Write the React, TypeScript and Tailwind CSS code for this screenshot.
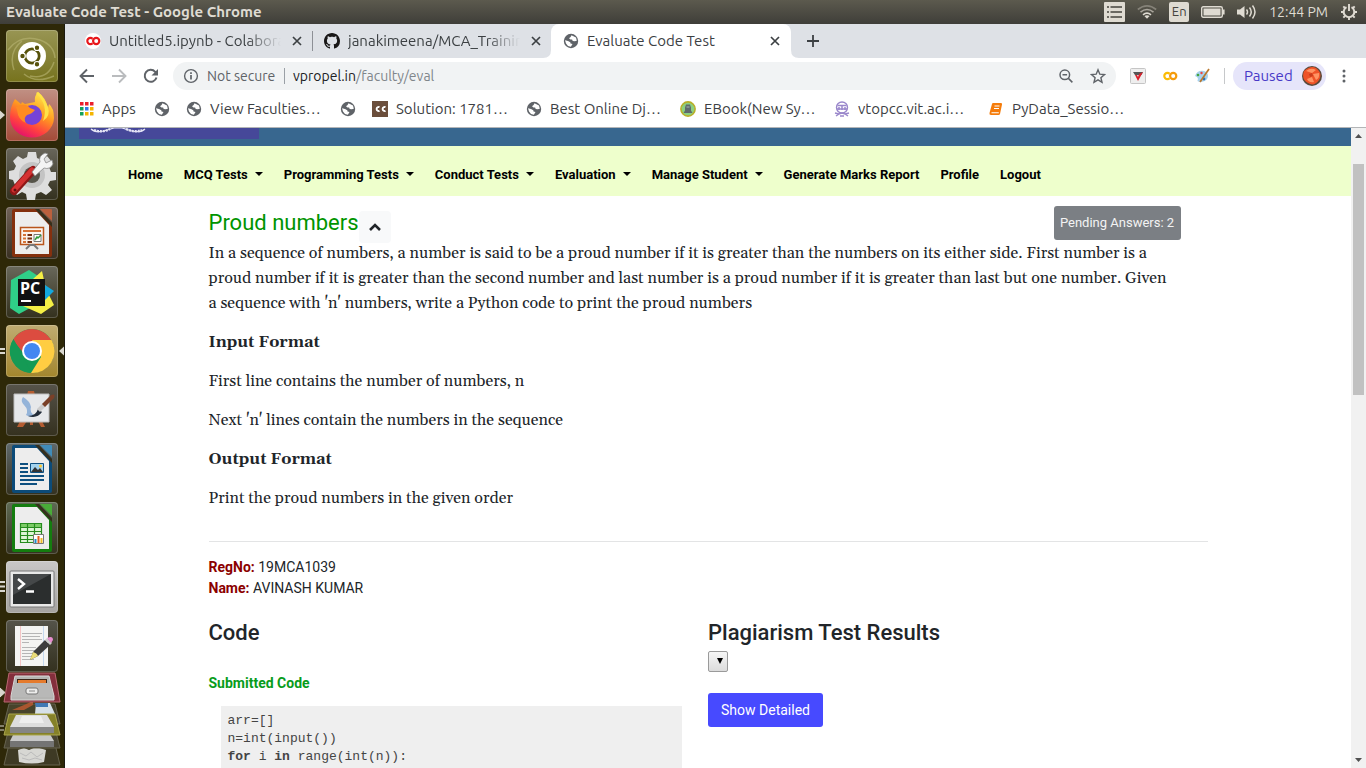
import React from "react";

function Globe() {
  return (
    <svg viewBox="0 0 16 16" className="size-4 shrink-0">
      <circle cx="8" cy="8" r="7.2" fill="#5f6368" />
      <path d="M8.5 2.2 13 4.6l.8 3.2-2 .4-2.1-.2-.6-1.4H7.5L6 5.2 7.6 4z" fill="#fff" />
      <path d="M2 7.2 5 8l2.3 1.2.2 1.3 2 .4-1.6 2.9L5 13 3 10.5z" fill="#fff" />
    </svg>
  );
}

function Colab({ a, b }: { a: string; b: string }) {
  return (
    <svg viewBox="0 0 16 16" className="size-4 shrink-0">
      <path d="M7.6 5.8a3.100 3.100 0 1 0 0 4.400" fill="none" stroke={a} strokeWidth="2.2" />
      <circle cx="11.2" cy="8" r="3.1" fill="none" stroke={b} strokeWidth="2.2" />
    </svg>
  );
}

function Github() {
  return (
    <svg viewBox="0 0 16 16" className="size-4 shrink-0">
      <path
        fill="#191717"
        d="M8 0C3.58 0 0 3.58 0 8c0 3.54 2.29 6.53 5.47 7.59.4.07.55-.17.55-.38 0-.19-.01-.82-.01-1.49-2.01.37-2.53-.49-2.69-.94-.09-.23-.48-.94-.82-1.13-.28-.15-.68-.52-.01-.53.63-.01 1.08.58 1.23.82.72 1.21 1.87.87 2.33.66.07-.52.28-.87.51-1.07-1.78-.2-3.64-.89-3.64-3.95 0-.87.31-1.59.82-2.15-.08-.2-.36-1.02.08-2.12 0 0 .67-.21 2.2.82.64-.18 1.32-.27 2-.27s1.36.09 2 .27c1.53-1.04 2.2-.82 2.2-.82.44 1.1.16 1.92.08 2.12.51.56.82 1.27.82 2.15 0 3.07-1.87 3.75-3.65 3.95.29.25.54.73.54 1.48 0 1.07-.01 1.93-.01 2.2 0 .21.15.46.55.38A8.01 8.01 0 0 0 16 8c0-4.42-3.58-8-8-8"
      />
    </svg>
  );
}

function TopBar() {
  return (
    <header className="flex h-6 shrink-0 items-center justify-between bg-linear-to-b from-[#5c5a4e] to-[#3f3e39] pr-2 pl-1.5 text-[#dfdbd2]">
      <h1 className="text-[15px] leading-6 font-bold">Evaluate Code Test - Google Chrome</h1>
      <div className="flex items-center">
        <svg viewBox="0 0 21 20" className="mr-3 h-5 w-[21px]">
          <rect width="21" height="20" rx="1" fill="#dfdbd2" />
          <path d="M3 5h2M3 10h2M3 15h2M6.5 5H18M6.5 10H18M6.5 15H18" stroke="#45443e" strokeWidth="1.5" />
        </svg>
        <svg viewBox="0 0 20 16" className="mr-3 h-4 w-5" fill="none" strokeWidth="1.6">
          <path d="M.8 5.5Q10-1.8 19.2 5.5" stroke="#858278" />
          <path d="M3.5 8.2Q10 2.8 16.500 8.2" stroke="#aaa69d" />
          <path d="M6 10.8Q10 7.5 14 10.8" stroke="#dfdbd2" />
          <path d="m10 14.800-2.600-2.700q2.600-1.900 5.200 0z" fill="#dfdbd2" />
        </svg>
        <span className="mr-3 flex h-5 w-5 items-center justify-center rounded-xs bg-[#dfdbd2] text-[13px] text-[#45443e]">En</span>
        <svg viewBox="0 0 24 12" className="mr-3 h-3 w-6">
          <rect x=".7" y=".7" width="20.6" height="10.6" rx="1.5" fill="none" stroke="#dfdbd2" strokeWidth="1.4" />
          <rect x="2.5" y="2.5" width="17" height="7" fill="#dfdbd2" />
          <path d="M22.8 3.5v5" stroke="#dfdbd2" strokeWidth="1.6" />
        </svg>
        <svg viewBox="0 0 20 16" className="mr-3 h-4 w-5" fill="none" stroke="#dfdbd2" strokeWidth="1.5">
          <path d="M0 5.5h3L7.5 2v12L3 10.5H0z" fill="#dfdbd2" stroke="none" />
          <path d="M9.5 5.500q2 2.500 0 5M12.500 3.500q3.500 4.500 0 9M15.500 1.500q5 6.500 0 13" />
        </svg>
        <time className="mr-3 text-[14px] whitespace-nowrap">12:44 PM</time>
        <svg viewBox="0 0 18 18" className="size-[18px]" fill="none" stroke="#dfdbd2">
          <path d="M6.5 4.200a5.300 5.300 0 1 0 5 0" strokeWidth="2" />
          <path d="M9 1v7M9 14.500V17M1 9h2.500M14.500 9H17M3.300 3.300 5 5M14.700 3.300 13 5M3.300 14.700 5 13M14.700 14.700 13 13" strokeWidth="1.9" />
        </svg>
      </div>
    </header>
  );
}

function Doc({ dark, light, children }: { dark: string; light: string; children: React.ReactNode }) {
  return (
    <>
      <path d="M8 2h25l13 14v32a2 2 0 0 1-2 2H8a2 2 0 0 1-2-2V4a2 2 0 0 1 2-2z" fill={dark} />
      <path d="M9 5h22l12 13v29H9z" fill="#ededed" />
      <path d="m29 2 17 18v-4L33 2z" fill="#352f1c" />
      <path d="M34 2h11q1 0 1 1v11z" fill={light} />
      {children}
    </>
  );
}

const launchers: { name: string; tile: string; art: React.ReactNode; left?: number; right?: boolean }[] = [
  {
    name: "Search your computer",
    tile: "bg-linear-to-b from-[#989553] to-[#77731c]",
    art: (
      <>
        <path d="M2 20Q14 4 34 10q14 5 15 18M8 40Q2 22 16 11m8 35q18 4 24-14M18 44q12 10 30 2" fill="none" stroke="#b9b675" strokeWidth="1.5" opacity=".6" />
        <circle cx="26" cy="26" r="14" fill="#fff" />
        <circle cx="26" cy="26" r="7.2" fill="none" stroke="#57520b" strokeWidth="2.8" />
        <g fill="#57520b" stroke="#fff" strokeWidth="1.2">
          <circle cx="16.5" cy="26" r="2.8" />
          <circle cx="31" cy="17.7" r="2.8" />
          <circle cx="31" cy="34.3" r="2.8" />
        </g>
      </>
    ),
  },
  {
    name: "Firefox",
    tile: "bg-linear-to-b from-[#c09084] to-[#a44a38]",
    left: 1,
    art: (
      <>
        <defs>
          <linearGradient id="fox" x1=".8" y1="0" x2=".3" y2="1">
            <stop stopColor="#fff44f" />
            <stop offset=".45" stopColor="#ff9820" />
            <stop offset=".75" stopColor="#ff4040" />
            <stop offset="1" stopColor="#e3106d" />
          </linearGradient>
        </defs>
        <path d="M9 10q-5 8-5 18a22 20 0 0 0 44 1q0-10-5-14l-1 4Q40 9 32 3q-4 4-3 10l-10 2-3-2-1 2z" fill="url(#fox)" />
        <circle cx="26" cy="26" r="10" fill="#7543d8" />
        <path d="M10 18q9-5 14 1l5 2q-3 4-8 5-4 3-1 8-8-3-9-13z" fill="#ff8b22" />
        <path d="M30 4q13 12 7 28 8-5 5-14Q38 8 32 3z" fill="#ffe248" />
      </>
    ),
  },
  {
    name: "System Settings",
    tile: "bg-linear-to-b from-[#69665b] to-[#34311f]",
    art: (
      <>
        <path d="m22 4 8 0 1 6 5 2 5-4 5 6-3 5 2 5h5v8l-6 1-2 4 4 5-6 5-5-3-5 2-1 6h-8l-1-6-4-2-5 3-5-5 3-5-2-5-4-1v-8l5-1 2-4-3-5 5-5 5 3 4-2z" fill="#dedede" />
        <circle cx="26" cy="27" r="13" fill="#c4c4c4" />
        <circle cx="26" cy="27" r="8" fill="#56544a" />
        <path d="m8 43 19-21" stroke="#8e1717" strokeWidth="8" strokeLinecap="round" />
        <path d="m8 42 18-20" stroke="#d43131" strokeWidth="5" strokeLinecap="round" />
        <path d="m26 24 8-10q-2-6 5-9l3 1-4 5 2 4 6-3 1 4q-3 6-9 4l-9 8z" fill="#f4f4f4" stroke="#8a8a8a" strokeWidth=".8" />
        <circle cx="9" cy="42" r="1.5" fill="#631010" />
      </>
    ),
  },
  {
    name: "LibreOffice Impress",
    tile: "bg-linear-to-b from-[#716359] to-[#393022]",
    art: (
      <Doc dark="#84300e" light="#bb603d">
        <rect x="14.5" y="20.5" width="23" height="17" fill="#fbf4ee" stroke="#b9551c" strokeWidth="1.5" />
        <path d="M17 24h18" stroke="#d67436" strokeWidth="2" />
        <path d="M17 28h3M17 31.500h3M17 35h3" stroke="#d67436" strokeWidth="2" />
        <path d="M21.500 28H26M21.500 31.500H26M21.500 35H26" stroke="#763011" strokeWidth="2" />
        <path d="M28 27.500h7v7h-7z" fill="#fff" stroke="#777" />
        <path d="m29 33 2-3 1 1 3-3" fill="none" stroke="#319b3c" strokeWidth="1.5" />
        <path d="m20 42 4-4h4l4 4" fill="none" stroke="#777" strokeWidth="2" />
      </Doc>
    ),
  },
  {
    name: "PyCharm",
    tile: "bg-linear-to-b from-[#69685b] to-[#34311e]",
    art: (
      <>
        <path d="m5 14 18-10 12 8v24L13 48 4 42z" fill="#2fcf88" />
        <path d="m27 13 9-8 4 18 8 16-13 9-18-8z" fill="#f5ef45" />
        <path d="m36 17 12 8-9 9z" fill="#13a8df" />
        <path d="M12 13h27v27H12z" fill="#111" />
        <path d="M15 35h10" stroke="#fff" strokeWidth="2" />
        <text x="14" y="28" fill="#fff" fontSize="16" fontWeight="700" fontFamily="Open Sans, sans-serif">PC</text>
      </>
    ),
  },
  {
    name: "Google Chrome",
    tile: "bg-linear-to-b from-[#c0ac71] to-[#a3862c]",
    left: 2,
    right: true,
    art: (
      <>
        <circle cx="26" cy="26" r="22" fill="#159a55" />
        <path d="M7 15a22 22 0 0 1 38 0L26 17l-7 13z" fill="#dc4c40" />
        <path d="M26 15h19.500A22 22 0 0 1 25 48l10-16z" fill="#ffcd42" />
        <path d="m7.500 14 9.500 17L25 48A22 22 0 0 1 7.500 14" fill="#159a55" />
        <circle cx="26" cy="26" r="10" fill="#fff" />
        <circle cx="26" cy="26" r="8" fill="#4387f1" />
      </>
    ),
  },
  {
    name: "Painter",
    tile: "bg-linear-to-b from-[#56534a] to-[#35311f]",
    art: (
      <>
        <path d="M22 7h6l1 4h-8zM14 37l-3 6h6l4-6M32 37l3 6h4l-3-6M24 37h3v4h-3z" fill="#b45d32" />
        <path d="M8 10h35v28H8z" fill="#e6e8ea" stroke="#bdbdbd" />
        <path d="M17 13q-3 4 1 8 5 5 2 10 4 3 9 1-6-4-4-9-1-6-8-10z" fill="#7fa6d5" opacity=".8" />
        <path d="M22 32q8 0 10-7l4 3q-5 7-14 4" fill="#222c38" />
        <path d="m31 25 6-6 3 3-6 6z" fill="#ccc" />
        <path d="m36 20 9-9q5-2 3 3l-9 9z" fill="#7a4028" />
      </>
    ),
  },
  {
    name: "LibreOffice Writer",
    tile: "bg-linear-to-b from-[#606a6c] to-[#34311f]",
    art: (
      <Doc dark="#0c4b79" light="#408cb9">
        <path d="M14 21h8M14 25h8M14 29h8M14 33h24M14 37h24M14 41h17" stroke="#0e5080" strokeWidth="2" />
        <path d="M24.500 20.500h13v9h-13z" fill="#a3d3ee" stroke="#0e5080" />
        <path d="m25 29 4-5 3 3 2-2 3 4z" fill="#333" />
        <circle cx="34.5" cy="23" r="1.5" fill="#ffc933" />
      </Doc>
    ),
  },
  {
    name: "LibreOffice Calc",
    tile: "bg-linear-to-b from-[#5f6b54] to-[#34311f]",
    art: (
      <Doc dark="#147d0f" light="#49ac38">
        <path d="M14.500 21.500h21v19h-21z" fill="#dff5d7" />
        <path d="M14 21h22v4H14z" fill="#7ccb66" />
        <path d="M14.500 21.500h21v19h-21zM14 25.500h21M14 29.500h21M14 33.500h21M14 37.500h21M21.500 21v19M28.500 21v19" fill="none" stroke="#268b1e" strokeWidth="1.2" />
        <path d="M27.500 32.500h10v9h-10z" fill="#fff" stroke="#777" />
        <path d="M29.500 41v-4" stroke="#218bc9" strokeWidth="2" />
        <path d="M32.500 41v-7" stroke="#e45c20" strokeWidth="2" />
        <path d="M35.500 41v-5" stroke="#f0bd28" strokeWidth="2" />
      </Doc>
    ),
  },
  {
    name: "Terminal",
    tile: "bg-linear-to-b from-[#c9c8c7] to-[#a5a3a0]",
    left: 3,
    art: (
      <>
        <rect x="4" y="10" width="44" height="36" rx="1" fill="#e9e9e8" stroke="#777" />
        <path d="M7 13h38v30H7z" fill="#2b2e2e" />
        <path d="M7 13h38L7 34z" fill="#454849" />
        <path d="m12 18 6 5-6 5M20 30.500h8" fill="none" stroke="#fff" strokeWidth="2.4" />
      </>
    ),
  },
  {
    name: "Text Editor",
    tile: "bg-linear-to-b from-[#55544a] to-[#34311f]",
    art: (
      <>
        <path d="M9 6h33v40H9z" fill="#f4f4f2" />
        <path d="M14.500 6v40" stroke="#f3c4c4" />
        <path d="M37.500 6v40" stroke="#c4d8ee" />
        <path d="M16 13.500h20M16 16.500h18M16 19.500h20M16 22.500h7M16 27.500h14M16 30.500h17M16 33.500h12M16 36.500h15M16 39.500h12" stroke="#b5b5b5" />
        <path d="m24 40 3-8 12-12 5 5-12 11z" fill="#3d3d3d" />
        <path d="m24 40 3-8q4 1 5 4z" fill="#eadc78" />
        <path d="m39 20 2-2 5 5-2 2z" fill="#ccc" />
        <path d="m41 18q6-3 6 2l-2 3z" fill="#e88ed0" />
      </>
    ),
  },
];

function Pips({ n }: { n: number }) {
  if (n === 1) return <path d="M0 21.500 5 26l-5 4.500z" fill="#d9d7cf" />;
  if (n === 2) return <path d="M0 24h5M0 28h5" stroke="#d9d7cf" strokeWidth="2.2" />;
  return <path d="M0 21h5M0 25.500h5M0 30h5" stroke="#d9d7cf" strokeWidth="2.2" />;
}

function Launcher() {
  return (
    <nav aria-label="Launcher" className="flex w-[65px] shrink-0 flex-col overflow-hidden border-r border-[#1b1a10] bg-[#2e2808] pt-1.5">
      <div className="flex shrink-0 flex-col gap-[7px]">
        {launchers.map((l) => (
          <div key={l.name} className="flex h-[52px]">
            <svg viewBox="0 0 6 52" className="h-[52px] w-1.5 shrink-0">{l.left ? <Pips n={l.left} /> : null}</svg>
            <button aria-label={l.name} className={"size-[52px] shrink-0 overflow-hidden rounded-[4px] shadow-[inset_0_0_0_1px_rgba(255,255,255,0.2)] " + l.tile}>
              <svg viewBox="0 0 52 52" className="size-[52px]">{l.art}</svg>
            </button>
            <svg viewBox="0 0 6 52" className="h-[52px] w-1.5 shrink-0">{l.right ? <path d="M6 21.500 1 26l5 4.500z" fill="#d9d7cf" /> : null}</svg>
          </div>
        ))}
      </div>
      <svg viewBox="0 0 64 96" className="h-24 w-16 shrink-0">
        <path d="M9 72h46l5 21H4z" fill="#3e3a24" stroke="#66634f" />
        <path d="m18 78 6-2 5 2 7-3 10 3-2 12q-12 3-25 0z" fill="#d7d7d3" />
        <path d="m20 81 6 3 5-4 6 5 6-4M22 86l7 2 6-2 7 2" fill="none" stroke="#bbb" />
        <path d="M9 56h46l5 20H4z" fill="#484431" stroke="#66634f" />
        <path d="M16 57h31l7 12v6H10v-6z" fill="#c8c8c8" />
        <path d="M10 69h44v6H10z" fill="#747474" />
        <path d="M9 32h46l5 20H4z" fill="#47432b" stroke="#66634f" />
        <path d="m12 38 12-5 9-4v4l-9 5z" fill="#a9562f" />
        <path d="M36 31h14l5 11H35z" fill="#d6e0e8" />
        <path d="M35 31h13v4H36z" fill="#4079b5" />
        <path d="M9 42h46l5 21H4z" fill="#858129" stroke="#aaa64c" />
        <path d="M16 43h31l7 12v6H10v-6z" fill="#ddd" />
        <path d="M10 55h44v6H10z" fill="#858585" />
        <path d="M22 44h19l3 7H19z" fill="#eee" />
        <path d="M9 1h46l5 29H4z" fill="#842f3c" stroke="#b96670" />
        <path d="M15 4h34l5 20v4H11v-4z" fill="#b4b4b2" stroke="#d8d8d7" />
        <path d="M17 7h30v4H17z" fill="#3d2518" />
        <path d="M18 8h28v3H18z" fill="#e57b2d" />
        <path d="M14 11h36l3 14H12z" fill="#b8b8b7" />
        <rect x="26" y="16" width="12" height="6" rx="2" fill="#ececeb" stroke="#777" />
        <path d="M29 19h6" stroke="#888" />
        <path d="m0 16 5 4.500L0 25zM0 54h4M0 58h4" fill="#d9d7cf" stroke="#d9d7cf" />
      </svg>
    </nav>
  );
}

function Close() {
  return (
    <button aria-label="Close tab" className="flex size-4 shrink-0 items-center justify-center">
      <svg viewBox="0 0 10 10" className="size-[10px]" stroke="#3c4043" strokeWidth="1.7">
        <path d="m1 1 8 8M9 1 1 9" />
      </svg>
    </button>
  );
}

const fade = "min-w-0 flex-1 overflow-hidden text-left text-[15px] whitespace-nowrap mask-r-from-80%";

function Tabs() {
  return (
    <div className="flex h-[34px] shrink-0 items-center bg-[#dee1e6] pl-2">
      <div className="flex w-[239px] items-center gap-2 pr-[7px] pl-3">
        <span className="rounded-full bg-white"><Colab a="#e8171b" b="#e8171b" /></span>
        <button className={fade}>Untitled5.ipynb - Colaboratory</button>
        <Close />
      </div>
      <div className="h-5 w-px bg-[#8d9096]" />
      <div className="flex w-[238px] items-center gap-2 pr-[7px] pl-[11px]">
        <Github />
        <button className={fade}>janakimeena/MCA_Training</button>
        <Close />
      </div>
      <div className="relative flex h-full w-[240px] items-center gap-2 rounded-t-lg bg-white pr-2 pl-3">
        <svg viewBox="0 0 8 8" className="absolute bottom-0 -left-2 size-2"><path d="M8 0v8H0q8 0 8-8" fill="#fff" /></svg>
        <svg viewBox="0 0 8 8" className="absolute -right-2 bottom-0 size-2"><path d="M0 0v8h8Q0 8 0 0" fill="#fff" /></svg>
        <Globe />
        <button className="flex-1 text-left text-[15px] whitespace-nowrap">Evaluate Code Test</button>
        <Close />
      </div>
      <button aria-label="New tab" className="ml-4">
        <svg viewBox="0 0 12 12" className="size-3" stroke="#3c4043" strokeWidth="1.8"><path d="M6 0v12M0 6h12" /></svg>
      </button>
    </div>
  );
}

function Toolbar() {
  return (
    <div className="flex h-9 shrink-0 items-center bg-white pr-3.5 pl-3.5 text-[14px]">
      <button aria-label="Back" className="mr-4">
        <svg viewBox="0 0 16 16" className="size-4" fill="none" stroke="#5f6368" strokeWidth="1.9"><path d="M15 8H2M8 1.500 1.500 8 8 14.500" /></svg>
      </button>
      <button aria-label="Forward" className="mr-4">
        <svg viewBox="0 0 16 16" className="size-4" fill="none" stroke="#babcbe" strokeWidth="1.9"><path d="M1 8h13M8 1.500 14.500 8 8 14.500" /></svg>
      </button>
      <button aria-label="Reload" className="mr-3.5">
        <svg viewBox="0 0 16 16" className="size-4"><path d="M13.500 9.500A6 6 0 1 1 12.200 3.800L13.500 5" fill="none" stroke="#5f6368" strokeWidth="2" /><path d="M15 1v6.500H8.500z" fill="#5f6368" /></svg>
      </button>
      <div className="flex h-7 min-w-0 flex-1 items-center rounded-full bg-[#f1f3f4] pr-2.5 pl-2.5">
        <svg viewBox="0 0 16 16" className="mr-2 size-4 shrink-0" fill="none" stroke="#5f6368">
          <circle cx="8" cy="8" r="6.4" strokeWidth="1.4" />
          <path d="M8 7v4.500M8 4.300V6" strokeWidth="1.7" />
        </svg>
        <span className="w-[69px] whitespace-nowrap text-[#5f6368]">Not secure</span>
        <span className="mx-2 h-4 w-px shrink-0 bg-[#9aa0a6]" />
        <span className="flex-1 whitespace-nowrap text-[#80868b]"><span className="text-[#202124]">vpropel.in</span>/faculty/eval</span>
        <button aria-label="Zoom" className="mr-4">
          <svg viewBox="0 0 16 16" className="size-4" fill="none" stroke="#5f6368" strokeWidth="1.5"><circle cx="6.8" cy="6.8" r="4.8" /><path d="m10.400 10.400 4 4M4.500 6.800h4.600" /></svg>
        </button>
        <button aria-label="Bookmark">
          <svg viewBox="0 0 16 16" className="size-4" fill="none" stroke="#5f6368" strokeWidth="1.4"><path d="m8 1.800 1.800 4.400 4.700.4-3.600 3.100 1.100 4.600-4-2.500-4 2.500 1.100-4.600L1.500 6.600l4.700-.4z" /></svg>
        </button>
      </div>
      <div className="flex shrink-0 items-center gap-4 pl-3.5">
        <svg viewBox="0 0 16 16" className="size-4"><rect x=".5" y=".5" width="15" height="15" rx="1" fill="#eee" stroke="#c5c5c5" /><path d="M3 4h10l-1.500 3H5z" fill="#555" /><path d="m5 7 3 6 5-9-4 2-1 3-1-2z" fill="#d9202b" /></svg>
        <Colab a="#fbbc04" b="#f59b0b" />
        <svg viewBox="0 0 16 16" className="size-4"><path d="M1 8q2-6 9-5 4 1 4 5 0 5-7 6-5 0-3-3 0-2-3-3" fill="#a9d2ed" /><circle cx="4" cy="7" r="1.3" fill="#46a43c" /><circle cx="7.5" cy="5" r="1.2" fill="#e44" /><circle cx="10" cy="11" r="1.4" fill="#2b72ba" /><path d="m15 1-9 13" stroke="#b8782f" strokeWidth="1.7" /></svg>
      </div>
      <span className="mr-2 ml-3.5 h-4 w-px shrink-0 bg-[#c6c8ca]" />
      <button className="flex h-7 w-[93px] shrink-0 items-center justify-between rounded-full bg-[#e6e5fa] pr-1 pl-[11px] text-[15px] text-[#4839c7]">
        Paused
        <svg viewBox="0 0 20 20" className="size-5">
          <circle cx="10" cy="10" r="10" fill="#5a4a3c" />
          <path d="M2 5q7-6 12-3 7 5 3 12-5 7-11 3Q-1 13 2 5" fill="#ee5328" />
          <path d="M4 5q5-4 10-1l-4 3zM11 8l6-1q1 5-3 7zM5 13l5-2 2 5q-5 1-7-3" fill="#ff9463" />
          <path d="m7 8 3-1 1 3-3 1z" fill="#c93d1c" />
        </svg>
      </button>
      <button aria-label="Menu" className="ml-2.5">
        <svg viewBox="0 0 16 16" className="size-4" fill="#5f6368"><circle cx="8" cy="3" r="1.5" /><circle cx="8" cy="8" r="1.5" /><circle cx="8" cy="13" r="1.5" /></svg>
      </button>
    </div>
  );
}

const bookmarks: { text: string; icon: React.ReactNode }[] = [
  { text: "", icon: <Globe /> },
  { text: "View Faculties…", icon: <Globe /> },
  { text: "", icon: <Globe /> },
  {
    text: "Solution: 1781…",
    icon: (
      <svg viewBox="0 0 16 16" className="size-4 shrink-0"><path d="M0 0h16v16H0z" fill="#6b4e3b" /><path d="M7.500 6.200A2 2 0 1 0 7.500 9.800M13.500 6.200a2 2 0 1 0 0 3.600" fill="none" stroke="#fff" strokeWidth="1.9" /></svg>
    ),
  },
  { text: "Best Online Dj…", icon: <Globe /> },
  {
    text: "EBook(New Sy…",
    icon: (
      <svg viewBox="0 0 16 16" className="size-4 shrink-0">
        <circle cx="8" cy="8" r="7.1" fill="#8ccf80" stroke="#b9ae27" strokeWidth="1.6" />
        <path d="M6 3.500h4l1 3v3l1.500 2.500h-9L5 9.500v-3z" fill="#5f6a6c" />
        <path d="M6.500 6h3" stroke="#a5b5b0" />
      </svg>
    ),
  },
  {
    text: "vtopcc.vit.ac.i…",
    icon: (
      <svg viewBox="0 0 16 16" className="size-4 shrink-0" fill="none" stroke="#9a87cb"><circle cx="8" cy="6.5" r="5.5" strokeWidth="1.4" /><path d="M3 8h10M5 6v3M8 5v4M11 6v3M3.500 4.500h9" strokeWidth="1.5" /><path d="m1 12 4 1 3-1 3 1 4-1M2 15l3-2m9 2-3-2M6 15h4" strokeWidth="1.5" /></svg>
    ),
  },
  {
    text: "PyData_Sessio…",
    icon: (
      <svg viewBox="0 0 16 16" className="size-4 shrink-0"><path d="M5 2h8q1.500 0 1 1.500L12 13q-.4 1-1.500 1H3q-2 0-1.500-2L4 3q.3-1 1-1" fill="#f57c0b" /><path d="M6.500 5h5M6 7.500h5M3.500 11.800h7.300" stroke="#fff" strokeWidth="1.1" /></svg>
    ),
  },
];

function Bookmarks() {
  const dots = ["#ea1f2d", "#ea1f2d", "#ea1f2d", "#14a05a", "#3379e8", "#f4b400", "#14a05a", "#f4b400", "#f4b400"];
  return (
    <div className="flex h-[34px] shrink-0 items-center gap-4 border-b border-[#b3b5b7] bg-white pb-[3px] pl-[13px] text-[15px]">
      <button className="flex w-[60px] shrink-0 items-center gap-2">
        <svg viewBox="0 0 16 16" className="size-4 shrink-0">
          {dots.map((c, i) => <rect key={i} x={2 + (i % 3) * 5} y={1 + Math.floor(i / 3) * 5} width="3.5" height="3.5" fill={c} />)}
        </svg>
        Apps
      </button>
      {bookmarks.map((b, i) => (
        <a key={i} href="#" aria-label={b.text || "Bookmark"} className={b.text ? "flex w-[138px] shrink-0 items-center gap-2 whitespace-nowrap" : "shrink-0"}>
          {b.icon}
          {b.text}
        </a>
      ))}
    </div>
  );
}

const menu: [string, boolean][] = [
  ["Home", false],
  ["MCQ Tests", true],
  ["Programming Tests", true],
  ["Conduct Tests", true],
  ["Evaluation", true],
  ["Manage Student", true],
  ["Generate Marks Report", false],
  ["Profile", false],
  ["Logout", false],
];

function Page() {
  return (
    <main className="flex min-w-0 flex-1 flex-col overflow-hidden bg-white font-[Roboto,sans-serif] text-[14px] text-[#212529]">
      <div className="h-[18px] shrink-0 bg-[#38678f] pl-3.5">
        <svg viewBox="0 0 180 11" className="h-[11px] w-[180px] bg-[#464899]" fill="none" stroke="#e4e4f5">
          <path d="M12 1q4 4 13 2l10-3h8l10 3q9 2 13-2" strokeWidth="1.2" />
          <path d="M15 2q8 3 16-1M47 1q9 4 16 1" strokeWidth="2.4" strokeDasharray="2 1" />
        </svg>
      </div>
      <nav className="flex h-[50px] shrink-0 items-center gap-[21px] bg-[#eeffcc] pt-2 pl-[63px] text-[13px] font-bold whitespace-nowrap text-black">
        {menu.map(([label, drop]) =>
          drop ? (
            <button key={label} className="flex items-center gap-[7px]">
              {label}
              <svg viewBox="0 0 8 4" className="mb-0.5 h-1 w-2"><path d="M0 0h8L4 4z" /></svg>
            </button>
          ) : (
            <a key={label} href="#">{label}</a>
          ),
        )}
      </nav>
      <div className="mx-auto w-full max-w-[999px] shrink-0">
        <section className="pt-2.5 pr-[27px]">
          <div className="flex h-[35px] items-start">
            <h2 className="text-[22px] leading-[34px] text-[#009400]">Proud numbers</h2>
            <button aria-label="Collapse question" className="mt-[5px] flex size-8 items-center justify-center rounded-[4px] bg-[#f8f9fa]">
              <svg viewBox="0 0 12 8" className="h-2 w-3" fill="none" stroke="#212529" strokeWidth="2.6"><path d="m1 7 5-5 5 5" /></svg>
            </button>
            <span className="ml-auto flex h-[34px] w-[127px] items-center justify-center rounded-[3px] bg-[#7b7f84] text-[13px] text-[#f3f3f3]">Pending Answers: 2</span>
          </div>
          <div className="flex flex-col gap-3.5 font-['Georgia','Gelasio','Liberation_Serif',serif] text-[16px] leading-[25px]">
            <p>
              In a sequence of numbers, a number is said to be a proud number if it is greater than the numbers on its either side. First number is a
              proud number if it is greater than the second number and last number is a proud number if it is greater than last but one number. Given
              {" "}a&nbsp;sequence with 'n' numbers, write a Python code to print the proud numbers
            </p>
            <p className="font-bold">Input Format</p>
            <p>First line contains the number of numbers, n</p>
            <p>Next 'n' lines contain the numbers in the sequence</p>
            <p className="font-bold">Output Format</p>
            <p>Print the proud numbers in the given order</p>
          </div>
        </section>
        <hr className="mt-[30px] border-[#e3e4e5]" />
        <p className="mt-[15px] leading-[21px]">
          <b className="text-[#8b0000]">RegNo:</b> 19MCA1039
          <br />
          <b className="text-[#8b0000]">Name:</b> AVINASH KUMAR
        </p>
        <div className="mt-5 grid grid-cols-2">
          <section>
            <h3 className="text-[22px] leading-7 font-medium">Code</h3>
            <h4 className="mt-[26px] leading-[21px] font-bold text-[#089c1b]">Submitted Code</h4>
            <pre className="mt-3 mr-[26px] ml-3 bg-[#efefef] px-[7px] py-1.5 font-['Liberation_Mono',monospace] text-[13px] leading-[18px] text-[#444]">
              {"arr=[]\nn=int(input())\n"}
              <b>for</b> i <b>in</b> {"range(int(n)):\n"}
            </pre>
          </section>
          <section>
            <h3 className="text-[22px] leading-7 font-medium">Plagiarism Test Results</h3>
            <div className="relative mt-1 h-[21px] w-5">
              <select aria-label="Plagiarism test result" className="h-full w-full appearance-none rounded-xs border border-[#9a9a9a] bg-linear-to-b from-[#f6f6f6] to-[#dcdcdc]" />
              <svg viewBox="0 0 6 6" className="pointer-events-none absolute top-[7px] right-[5px] size-1.5"><path d="M0 0h6L3 6z" /></svg>
            </div>
            <button className="mt-[21px] h-[34px] w-[115px] rounded-[3px] bg-[#474aff] text-white">Show Detailed</button>
          </section>
        </div>
      </div>
    </main>
  );
}

function ScrollBar() {
  return (
    <div className="flex w-[15px] shrink-0 flex-col items-center bg-[#f1f1f1]">
      <svg viewBox="0 0 15 17" className="h-[17px] w-[15px]"><path d="M4 10h7L7.500 6z" fill="#505050" /></svg>
      <div className="mt-[19px] h-[231px] w-[11px] bg-[#c1c1c1]" />
      <svg viewBox="0 0 15 17" className="mt-auto h-[17px] w-[15px]"><path d="M4 7h7l-3.500 4z" fill="#505050" /></svg>
    </div>
  );
}

export default function App() {
  return (
    <div className="flex h-screen flex-col overflow-hidden font-['Ubuntu','Open_Sans',sans-serif] text-[#3c4043]">
      <TopBar />
      <div className="flex min-h-0 flex-1">
        <Launcher />
        <div className="flex min-w-0 flex-1 flex-col">
          <Tabs />
          <Toolbar />
          <Bookmarks />
          <div className="flex min-h-0 flex-1">
            <Page />
            <ScrollBar />
          </div>
        </div>
      </div>
    </div>
  );
}
